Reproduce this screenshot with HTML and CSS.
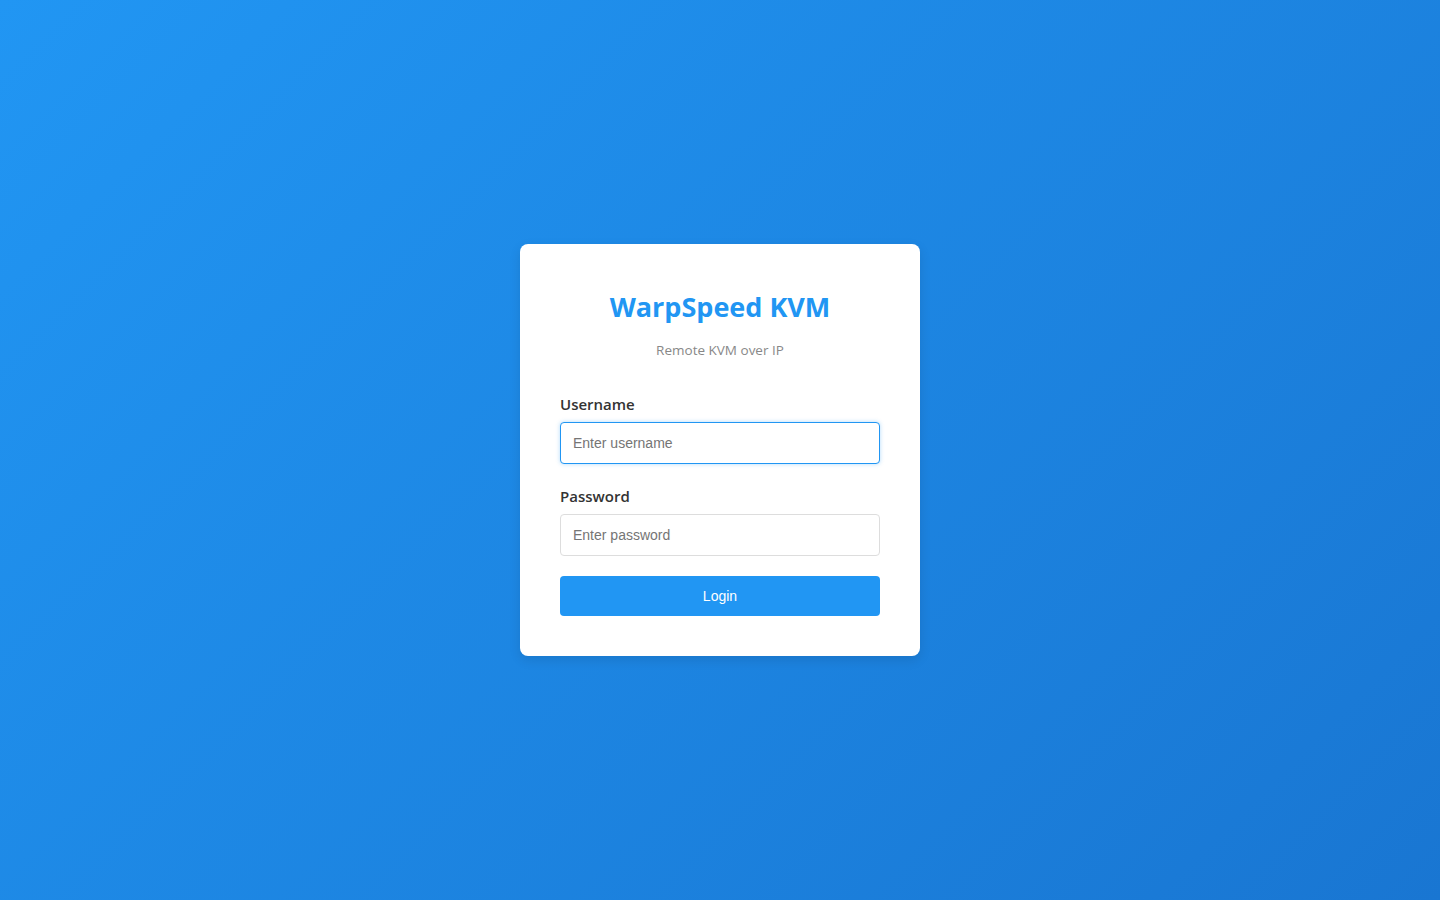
FILE: index.html
```html
<!DOCTYPE html>
<html lang="en">
<head>
<meta charset="utf-8">
<title>WarpSpeed KVM - Login</title>
<link rel="stylesheet" href="styles.css">
</head>
<body>
<main class="page">
  <form class="card" onsubmit="return false">
    <h1 class="title">WarpSpeed KVM</h1>
    <p class="subtitle">Remote KVM over IP</p>
    <div class="field field-first">
      <label class="label" for="username">Username</label>
      <input class="input is-focused" id="username" type="text" placeholder="Enter username">
    </div>
    <div class="field">
      <label class="label" for="password">Password</label>
      <input class="input" id="password" type="password" placeholder="Enter password">
    </div>
    <button class="btn" type="submit">Login</button>
  </form>
</main>
</body>
</html>
```
FILE: styles.css
```css
* { box-sizing: border-box; }
html, body { margin: 0; padding: 0; height: 100%; }
body {
  font-family: "Open Sans", "Noto Sans", sans-serif;
  background: linear-gradient(135deg, #2196f3 0%, #1976d2 100%);
  min-height: 100vh;
}
.page {
  min-height: 100vh;
  display: flex;
  align-items: center;
  justify-content: center;
}
.card {
  width: 400px;
  background: #fff;
  border-radius: 8px;
  padding: 40px;
  box-shadow: 0 4px 12px rgba(0, 0, 0, 0.1);
  display: flex;
  flex-direction: column;
}
.title {
  margin: 0;
  text-align: center;
  color: #2196f3;
  font-size: 27px;
  line-height: 46px;
  font-weight: 700;
}
.subtitle {
  margin: 0 0 24px;
  text-align: center;
  color: #888;
  font-size: 13.5px;
  line-height: 40px;
}
.field {
  display: flex;
  flex-direction: column;
  margin-bottom: 20px;
}
.field-first { margin-bottom: 22px; }
.label {
  color: #333;
  font-size: 15px;
  font-weight: 600;
  line-height: 20px;
  margin-bottom: 8px;
}
.input {
  width: 100%;
  height: 42px;
  padding: 0 12px;
  border: 1px solid #ddd;
  border-radius: 4px;
  font-family: "Liberation Sans", Arial, sans-serif;
  font-size: 14px;
  color: #333;
  outline: none;
  background: #fff;
}
.input::placeholder { color: #757575; }
.input.is-focused {
  border-color: #2196f3;
  box-shadow: 0 0 4px rgba(33, 150, 243, 0.35);
}
.btn {
  height: 40px;
  border: none;
  border-radius: 4px;
  background: #2196f3;
  color: #fff;
  font-family: "Liberation Sans", Arial, sans-serif;
  font-size: 14px;
  cursor: pointer;
}
```
